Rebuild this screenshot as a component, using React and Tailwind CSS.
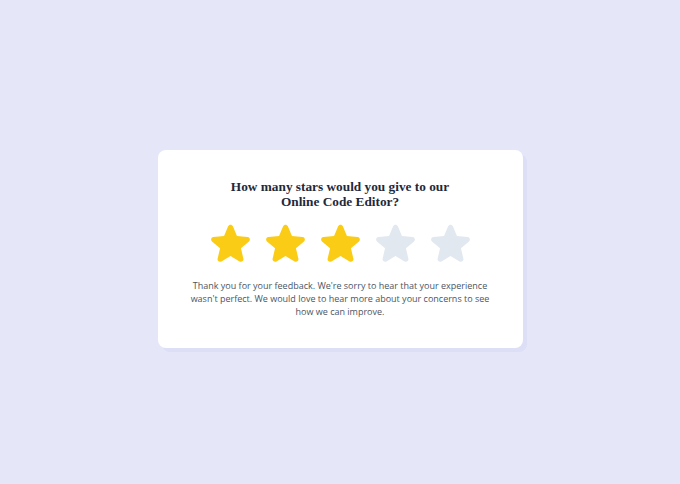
import { useState } from "react";

const STAR =
  "M10.788 3.21c.448-1.077 1.976-1.077 2.424 0l2.082 5.006 5.404.434c1.164.093 1.636 1.545.749 2.305l-4.117 3.527 1.257 5.273c.271 1.136-.964 2.033-1.96 1.425L12 18.354 7.373 21.18c-.996.608-2.231-.29-1.96-1.425l1.257-5.273-4.117-3.527c-.887-.76-.415-2.212.749-2.305l5.404-.434 2.082-5.005Z";

function Star({ filled }) {
  return (
    <svg
      viewBox="0 0 24 24"
      className={filled ? "w-[47px] h-[47px] text-[#facc15]" : "w-[47px] h-[47px] text-[#e2e8f0]"}
      fill="currentColor"
    >
      <path fillRule="evenodd" clipRule="evenodd" d={STAR} />
    </svg>
  );
}

function App() {
  const [rating, setRating] = useState(3);

  return (
    <div className="min-h-screen w-full bg-[#e5e7f9] flex items-center justify-center pt-[13px]">
      <div className="w-[365px] bg-white rounded-lg shadow-[4px_4px_0_#dcdff6] px-6 pt-[29px] pb-[30px] flex flex-col items-center">
        <h1 className="text-center text-[13.3px] leading-[15px] font-bold text-[#1e293b] font-['Liberation_Serif',serif]">
          How many stars would you give to our
          <br />
          Online Code Editor?
        </h1>
        <div className="flex gap-[8px] mt-[11px]">
          {[1, 2, 3, 4, 5].map((n) => (
            <button key={n} onClick={() => setRating(n)}>
              <Star filled={n <= rating} />
            </button>
          ))}
        </div>
        <p className="mt-[12px] text-center text-[9px] leading-[13px] text-[#4b5563] font-['Open_Sans',sans-serif]">
          Thank you for your feedback. We're sorry to hear that your experience
          wasn't perfect. We would love to hear more about your concerns to see
          how we can improve.
        </p>
      </div>
    </div>
  );
}

export default App;
